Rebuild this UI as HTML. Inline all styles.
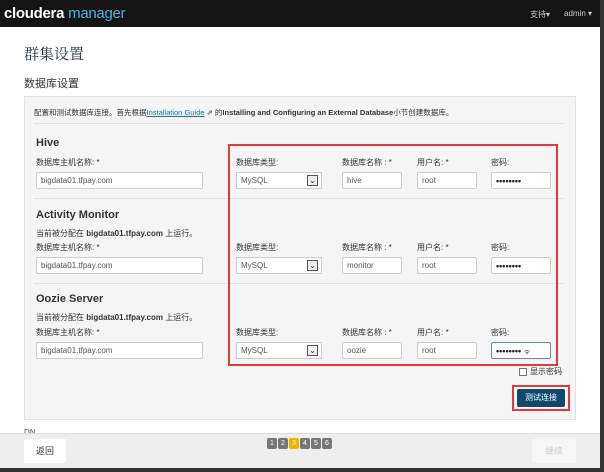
<!DOCTYPE html>
<html><head><meta charset="utf-8"><style>
*{box-sizing:border-box;margin:0;padding:0}
body{width:604px;height:472px;overflow:hidden;background:#fff;position:relative;font-family:"Liberation Sans","Noto Sans CJK SC",sans-serif;color:#333}
.a{position:absolute;white-space:nowrap}
.hdr{left:0;top:0;width:604px;height:27px;background:#141414}
.in{position:absolute;height:17px;background:#fff;border:1px solid #ccc;border-radius:2px;font-size:8px;color:#555;padding:4px 4px;line-height:8px}
.lb{font-size:8px;color:#333}
.h{font-size:11px;font-weight:bold;color:#333}
.hr{position:absolute;left:34px;width:530px;height:1px;background:#e2e2e2}
.sel{position:absolute;height:17px;width:86px;background:#fff;border:1px solid #ccc;font-size:8px;color:#555;padding:4px 4px;line-height:8px}
.sel i{position:absolute;right:3px;top:2px;width:11px;height:11px;border:1px solid #555;background:#eee;font-style:normal;font-size:8px;line-height:9px;text-align:center;color:#222}
.pw{font-size:9px;color:#222;font-weight:bold}
.pg{position:absolute;top:438px;width:10px;height:11px;background:#777;border-radius:2px;font-size:7px;color:#fff;text-align:center;line-height:11px}
</style></head><body>
<div class="a hdr"></div>
<div class="a" style="left:4px;top:5px;font-size:15px;font-weight:bold;color:#fff;letter-spacing:-0.3px">cloudera<span style="color:#4fb3e2;font-weight:normal;margin-left:4px">manager</span></div>
<div class="a" style="left:530px;top:9px;font-size:8px;color:#ccc">支持▾</div>
<div class="a" style="left:564px;top:9px;font-size:8px;color:#ccc">admin ▾</div>
<div class="a" style="left:600px;top:0;width:4px;height:472px;background:#333"></div>
<div class="a" style="left:0;top:468px;width:604px;height:4px;background:#333"></div>

<div class="a" style="left:24px;top:43px;font-size:15px;color:#234;font-family:'Noto Serif CJK SC',serif">群集设置</div>
<div class="a" style="left:24px;top:75px;font-size:11px;color:#333">数据库设置</div>

<div class="a" style="left:24px;top:96px;width:552px;height:324px;background:#f5f5f5;border:1px solid #e3e3e3"></div>
<div class="a" style="left:34px;top:107px;font-size:7.5px;color:#333">配置和测试数据库连接。首先根据<span style="color:#1a6fb0;text-decoration:underline">Installation Guide</span> ⇗ 的<b>Installing and Configuring an External Database</b>小节创建数据库。</div>
<div class="hr" style="top:123px"></div>

<div class="a h" style="left:36px;top:137px">Hive</div>
<div class="a lb" style="left:36px;top:157px">数据库主机名称: *</div>
<div class="in" style="left:36px;top:172px;width:167px">bigdata01.tfpay.com</div>
<div class="hr" style="top:198px"></div>

<div class="a h" style="left:36px;top:209px">Activity Monitor</div>
<div class="a lb" style="left:36px;top:228px">当前被分配在 <b>bigdata01.tfpay.com</b> 上运行。</div>
<div class="a lb" style="left:36px;top:242px">数据库主机名称: *</div>
<div class="in" style="left:36px;top:257px;width:167px">bigdata01.tfpay.com</div>
<div class="hr" style="top:283px"></div>

<div class="a h" style="left:36px;top:293px">Oozie Server</div>
<div class="a lb" style="left:36px;top:312px">当前被分配在 <b>bigdata01.tfpay.com</b> 上运行。</div>
<div class="a lb" style="left:36px;top:327px">数据库主机名称: *</div>
<div class="in" style="left:36px;top:342px;width:167px">bigdata01.tfpay.com</div>

<div class="a lb" style="left:236px;top:157px">数据库类型:</div><div class="a lb" style="left:342px;top:157px">数据库名称 : *</div><div class="a lb" style="left:417px;top:157px">用户名: *</div><div class="a lb" style="left:491px;top:157px">密码:</div>
<div class="sel" style="left:236px;top:172px">MySQL<i>⌄</i></div><div class="in" style="left:342px;top:172px;width:60px">hive</div><div class="in" style="left:417px;top:172px;width:60px">root</div><div class="in pw" style="left:491px;top:172px;width:60px">••••••••</div>

<div class="a lb" style="left:236px;top:242px">数据库类型:</div><div class="a lb" style="left:342px;top:242px">数据库名称 : *</div><div class="a lb" style="left:417px;top:242px">用户名: *</div><div class="a lb" style="left:491px;top:242px">密码:</div>
<div class="sel" style="left:236px;top:257px">MySQL<i>⌄</i></div><div class="in" style="left:342px;top:257px;width:60px">monitor</div><div class="in" style="left:417px;top:257px;width:60px">root</div><div class="in pw" style="left:491px;top:257px;width:60px">••••••••</div>

<div class="a lb" style="left:236px;top:327px">数据库类型:</div><div class="a lb" style="left:342px;top:327px">数据库名称 : *</div><div class="a lb" style="left:417px;top:327px">用户名: *</div><div class="a lb" style="left:491px;top:327px">密码:</div>
<div class="sel" style="left:236px;top:342px">MySQL<i>⌄</i></div><div class="in" style="left:342px;top:342px;width:60px">oozie</div><div class="in" style="left:417px;top:342px;width:60px">root</div><div class="in pw" style="left:491px;top:342px;width:60px;border-color:#6a8aa8">•••••••• <span style="font-weight:normal;font-size:7px">ᯤ</span></div>

<div class="a" style="left:228px;top:144px;width:330px;height:222px;border:2px solid #e03a3a"></div>

<div class="a" style="left:519px;top:368px;width:8px;height:8px;border:1px solid #777;background:#fff"></div>
<div class="a lb" style="left:530px;top:366px">显示密码</div>
<div class="a" style="left:512px;top:385px;width:58px;height:26px;border:2px solid #e03a3a"></div>
<div class="a" style="left:517px;top:389px;width:48px;height:18px;background:#0f4a6d;border-radius:2px;color:#fff;font-size:8px;text-align:center;line-height:18px">测试连接</div>

<div class="a" style="left:24px;top:428px;font-size:8px;color:#555">DN</div>
<div class="a" style="left:0;top:433px;width:600px;height:35px;background:#eeeeee;border-top:1px solid #ddd"></div>
<div class="a" style="left:24px;top:439px;width:42px;height:24px;background:#fff;border-radius:2px;font-size:9px;text-align:center;line-height:24px;color:#333">返回</div>
<div class="pg" style="left:267px">1</div><div class="pg" style="left:278px">2</div><div class="pg" style="left:289px;background:#f0b400">3</div><div class="pg" style="left:300px">4</div><div class="pg" style="left:311px">5</div><div class="pg" style="left:322px">6</div>
<div class="a" style="left:532px;top:439px;width:44px;height:24px;background:#f6f6f6;border-radius:2px;font-size:9px;text-align:center;line-height:24px;color:#ccc">继续</div>
</body></html>
